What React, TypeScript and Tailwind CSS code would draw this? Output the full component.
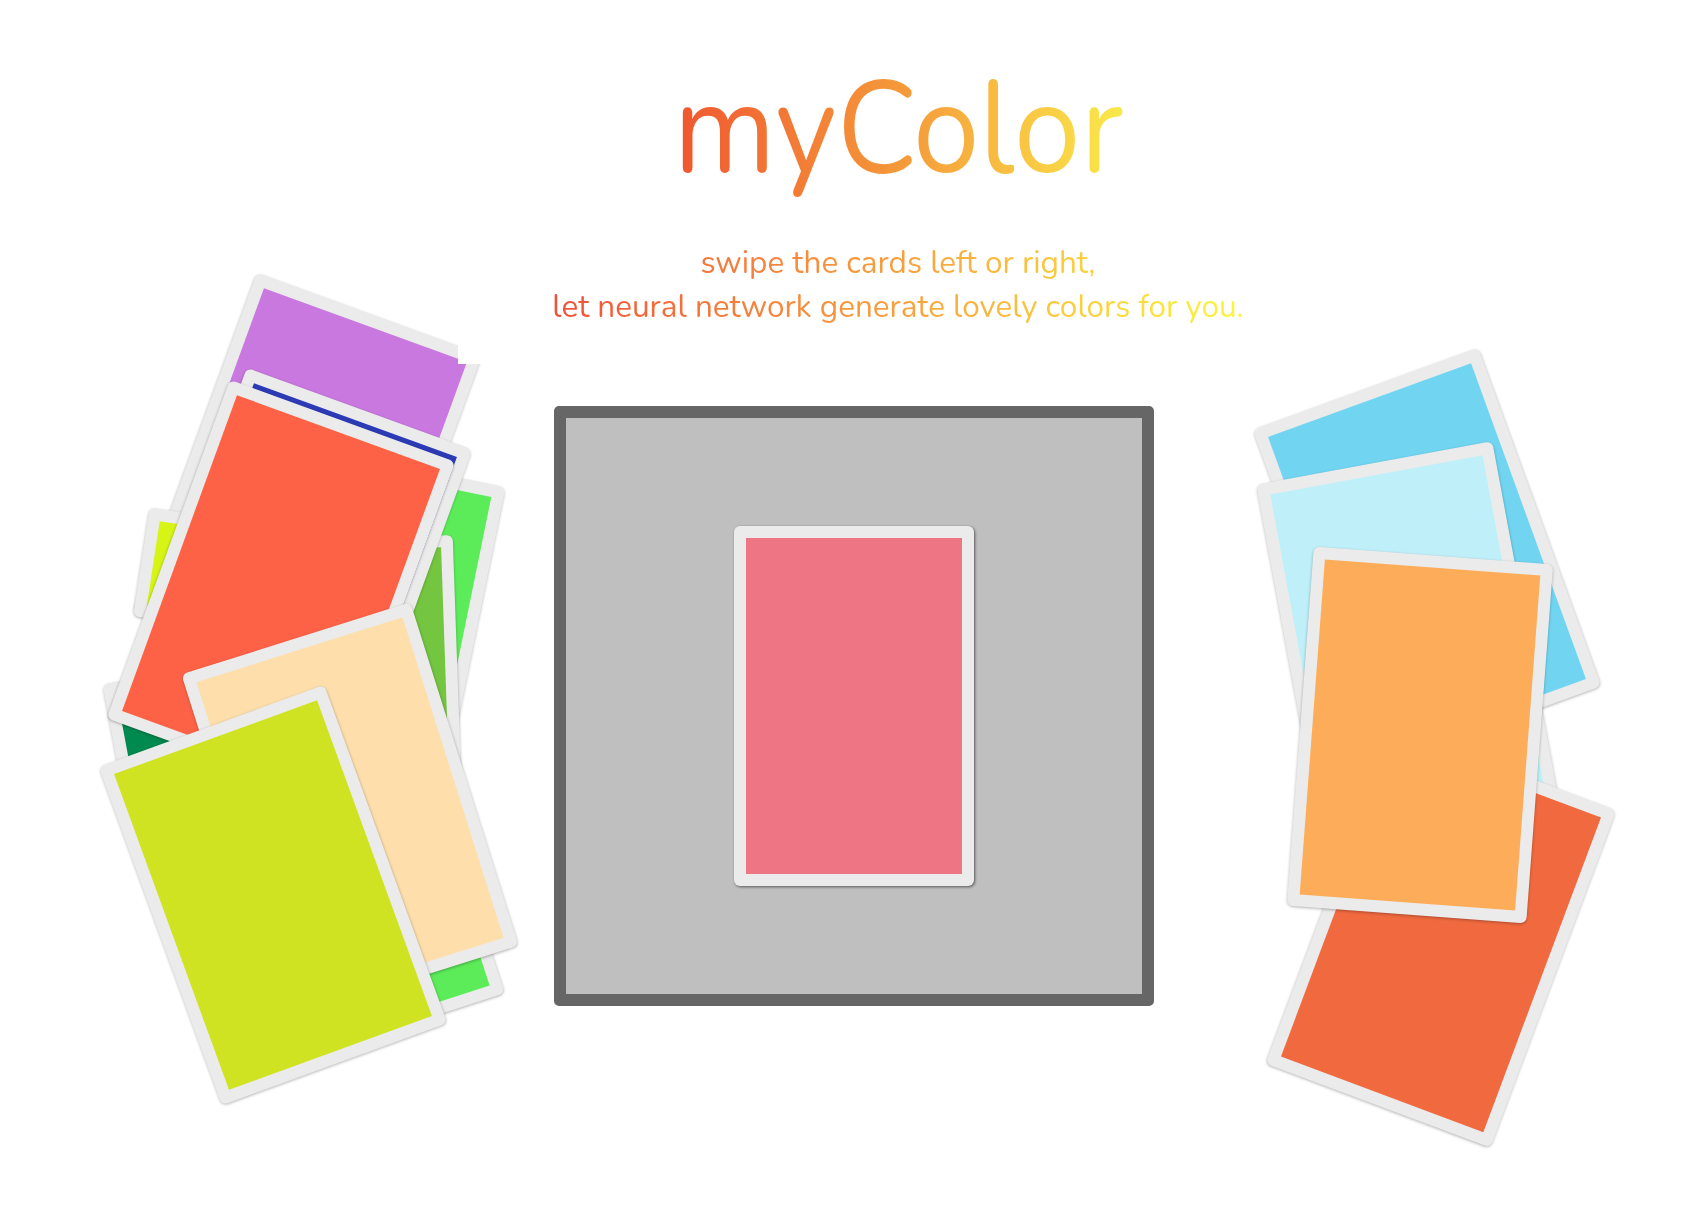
import React from 'react';

type PileCard = {
  color: string;
  x: number;
  y: number;
  rot: number;
  h?: number;
};

// centre point + rotation of every loose card, bottom of the pile first
const leftPile: PileCard[] = [
  { color: '#c978df', x: 308, y: 483, rot: 20 },
  { color: '#d6f516', x: 260, y: 580, rot: 8.7, h: 110 },
  { color: '#008a50', x: 238, y: 756, rot: -10.6, h: 190 },
  { color: '#5cec5a', x: 352, y: 640, rot: 11.5 },
  { color: '#5cec5a', x: 335, y: 859, rot: -18 },
  { color: '#74c540', x: 339, y: 719, rot: -2 },
  { color: '#2d3ab6', x: 298, y: 578, rot: 20 },
  { color: '#fe6246', x: 281, y: 590, rot: 20 },
  { color: '#fedeab', x: 350, y: 810, rot: -17.5 },
  { color: '#cfe323', x: 273, y: 895, rot: -20 },
];

const rightPile: PileCard[] = [
  { color: '#71d5f2', x: 1427, y: 558, rot: -20 },
  { color: '#bff0f9', x: 1407, y: 640, rot: -10.5 },
  { color: '#f0693f', x: 1441, y: 937, rot: 20.5 },
  { color: '#fdac59', x: 1420, y: 735, rot: 4.3 },
];

function LooseCard({ card }: { card: PileCard }) {
  const w = 240;
  const h = card.h ?? 360;
  return (
    <div
      className="absolute rounded-[6px] bg-[#ebebeb] p-[12px] shadow-[0_1px_3px_rgba(0,0,0,0.3)]"
      style={{
        left: card.x - w / 2,
        top: card.y - h / 2,
        width: w,
        height: h,
        transform: `rotate(${card.rot}deg)`,
      }}
    >
      <div className="h-full w-full" style={{ backgroundColor: card.color }} />
    </div>
  );
}

export default function App() {
  return (
    <main className="relative h-[1218px] w-full overflow-hidden bg-white font-['Nunito','Lato',sans-serif]">
      <header className="relative z-10 ml-[458px] w-[888px] bg-white pb-[35px] pr-[8px] pt-[63px] text-center">
        <h1 className="mx-auto w-fit scale-x-[0.905] bg-linear-to-r from-[#ef5530] via-[#f4983a] to-[#f9e94a] bg-clip-text pb-[24px] text-[132px] leading-none font-normal text-transparent">
          myColor
        </h1>
        <p className="mx-auto mt-[22px] w-fit bg-linear-to-r from-[#ef4f38] via-[#f7a03e] to-[#faf73a] bg-clip-text text-[31.5px] leading-[44px] text-transparent">
          swipe the cards left or right,
          <br />
          let neural network generate lovely colors for you.
        </p>
      </header>

      <section className="ml-[554px] mt-[42px] flex h-[600px] w-[600px] items-center justify-center rounded-[5px] border-[12px] border-[#666666] bg-[#bfbfbf]">
        <div className="h-[360px] w-[240px] rounded-[6px] bg-[#ebebeb] p-[12px] shadow-[1px_1px_3px_rgba(0,0,0,0.55)]">
          <div className="h-full w-full bg-[#ed7584]" />
        </div>
      </section>

      {leftPile.map((card, i) => (
        <LooseCard key={'l' + i} card={card} />
      ))}
      {rightPile.map((card, i) => (
        <LooseCard key={'r' + i} card={card} />
      ))}
    </main>
  );
}
